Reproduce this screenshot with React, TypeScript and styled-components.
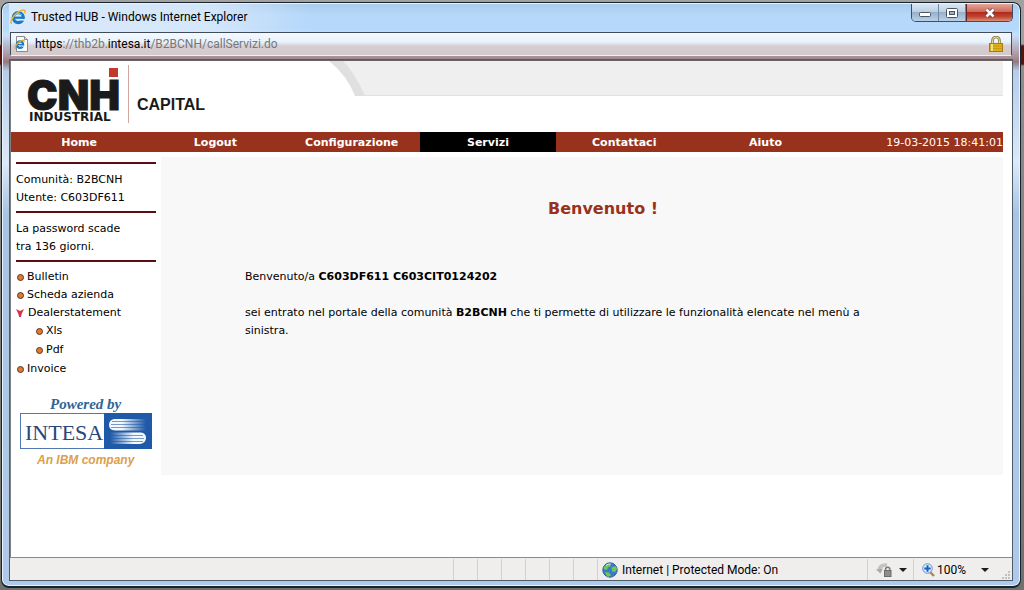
import React from "react";
import styled, { createGlobalStyle } from "styled-components";

const ui = `"Segoe UI", Roboto, "Open Sans", sans-serif`;
const web = `Verdana, "DejaVu Sans", sans-serif`;
const brick = "#98321c";

const GlobalStyle = createGlobalStyle`
  * { box-sizing: border-box; }
  body { margin: 0; }
  a { color: inherit; text-decoration: none; }
  button { border: 0; padding: 0; background: none; font: inherit; color: inherit; }
  ul { list-style: none; margin: 0; padding: 0; }
  h1, p { margin: 0; }
  svg { display: block; flex: none; }
`;

const Desktop = styled.div`
  display: flex;
  min-height: 100vh;
  padding: 2px 3px 2px 1px;
  background: linear-gradient(#a3a19f 0 44px, #5a130b 46px 64px, #8e8e8c 66px, #70716d 100%);
`;

const Window = styled.div`
  display: flex;
  flex-direction: column;
  flex: 1;
  min-width: 0;
  padding: 0 7px 5px;
  border: 1px solid #17242f;
  border-bottom-width: 2px;
  border-radius: 8px;
  background: linear-gradient(#a9cbea 0, #b5d8fb 12px, #b5d8fb 26px, #c8dff8 32px, #a98f98 54px, #93787f 59px, #b6cdea 68px, #dbe9f8 160px, #a9c4e2 210px, #b0c9ea 100%);
  box-shadow: inset 0 0 0 1px #e6f2fe;
`;

const TitleBar = styled.header`
  display: flex;
  align-items: flex-start;
  justify-content: space-between;
  height: 29px;
  margin-top: 1px;
  margin-bottom: -1px;
  background: linear-gradient(90deg, #dceafaee 0, #dceafacc 200px, #dceafa00 300px);
`;

const Title = styled.div`
  display: flex;
  align-items: center;
  gap: 5px;
  height: 26px;
  padding-left: 1px;
  font: 12px/18px ${ui};
  color: #000;
`;

const Caption = styled.div`
  display: flex;
  border: 1px solid #3c4e60;
  border-top: 0;
  border-radius: 0 0 5px 5px;
  overflow: hidden;
`;

const CaptionButton = styled.button<{ $close?: boolean }>`
  display: flex;
  align-items: center;
  justify-content: center;
  width: ${(p) => (p.$close ? 46 : 27)}px;
  height: 17px;
  border-left: ${(p) => (p.$close ? "1px solid #5b2420" : "0")};
  border-right: ${(p) => (p.$close ? "0" : "1px solid #7288a0")};
  background: ${(p) =>
    p.$close
      ? "linear-gradient(#e2a79b 0, #cf6a59 45%, #b0291b 50%, #bf4632 75%, #dd9077 100%)"
      : "linear-gradient(#d9e7f5 0, #bccfe2 45%, #98b0c9 50%, #b9d1e8 100%)"};
`;

const AddressBar = styled.div`
  display: flex;
  align-items: center;
  gap: 5px;
  height: 24px;
  margin: 0 1px;
  padding: 0 8px 0 3px;
  border: 1px solid #3f4d5a;
  border-bottom-color: #f3eeee;
  background: linear-gradient(#f4f9fe 0, #e8f3fd 9px, #d6ced3 13px, #d2c9cb 100%);
`;

const Address = styled.div`
  flex: 1;
  font: 12px/18px ${ui};
  color: #777;
  b { font-weight: 400; color: #000; }
`;

const Frame = styled.div`
  display: flex;
  flex-direction: column;
  flex: 1;
  margin-top: 3px;
  border: 1px solid #4d5c6b;
  background: #fff;
`;

const Page = styled.main`
  flex: 1;
  padding-right: 9px;
  border-left: 1px solid #808080;
  border-top: 1px solid #6b6465;
  font: 11px/18px ${web};
  color: #000;
`;

const Masthead = styled.div`
  display: flex;
  height: 71px;
`;

const Banner = styled.div`
  display: flex;
  flex: 1;
  height: 35px;
  margin-left: 106px;
`;

const BannerFill = styled.div`
  flex: 1;
  border-bottom: 1px solid #e2e2e2;
  background: #efefef;
`;

const Nav = styled.nav`
  display: grid;
  grid-template-columns: repeat(5, 136fr) 146fr 164fr;
  height: 20px;
  background: ${brick};
  color: #fff;
  line-height: 21px;
`;

const NavLink = styled.a<{ $active?: boolean }>`
  height: 20px;
  background: ${(p) => (p.$active ? "#000" : "transparent")};
  font-weight: 700;
  text-align: center;
`;

const Clock = styled.time`
  text-align: right;
  white-space: nowrap;
`;

const Columns = styled.div`
  display: flex;
  align-items: flex-start;
  gap: 5px;
  padding-top: 5px;
`;

const Sidebar = styled.aside`
  width: 145px;
  padding: 5px 0 0 5px;
`;

const Note = styled.div`
  padding: 7px 0 4px;
  border-top: 2px solid #5c0d14;
`;

const Menu = styled.ul`
  padding-top: 6px;
  border-top: 2px solid #5c0d14;
`;

const SubMenu = styled.ul`
  display: grid;
  gap: 1px;
  padding: 0 0 1px 19px;
`;

const MenuLink = styled.a`
  display: flex;
  align-items: center;
  gap: 3px;
`;

const Bullet = styled.span`
  width: 7px;
  height: 7px;
  margin-left: 1px;
  border: 1px solid #5e3420;
  border-radius: 50%;
  background: #e07a2c;
`;

const Powered = styled.a`
  display: block;
  margin: 17px 0 0 4px;
`;

const Content = styled.section`
  flex: 1;
  min-height: 318px;
  padding: 42px 42px 0 84px;
  background: #f8f8f8;
`;

const Heading = styled.h1`
  margin-bottom: 49px;
  font-size: 16px;
  line-height: 20px;
  text-align: center;
  color: ${brick};
`;

const Paragraph = styled.p`
  margin-bottom: 18px;
  padding-right: 60px;
`;

const StatusBar = styled.footer`
  display: flex;
  height: 23px;
  padding: 1px 1px 0 0;
  border-top: 1px solid #8a8a8a;
  background: #f0eded;
  font: 12px/22px ${ui};
  color: #000;
`;

const StatusCell = styled.div<{ $width?: number }>`
  display: flex;
  align-items: center;
  gap: 4px;
  flex: none;
  width: ${(p) => p.$width ?? 24}px;
  padding-left: 4px;
  border-left: 1px solid #d3d0d0;
`;

const StatusMessage = styled.div`
  flex: 1;
`;

const StatusButton = styled.button<{ $gap: number }>`
  display: flex;
  align-items: center;
  gap: ${(p) => p.$gap}px;
  padding-left: 4px;
`;

const ZoomValue = styled.span`
  display: flex;
  align-items: center;
  gap: 2px;
`;

const Grip = styled.div`
  margin-left: auto;
  align-self: flex-end;
`;

const ExplorerMark = ({ size }: { size: number }) => (
  <svg width={size} height={size} viewBox="0 0 16 16" aria-hidden="true">
    <circle cx="8.3" cy="8.6" r="5" fill="none" stroke="#1c78c8" strokeWidth="3.2" />
    <path d="M4 8.7h9" stroke="#1c78c8" strokeWidth="2.2" />
    <path d="M10.5 10h6v1.6h-6z" fill="#dcecfb" />
    <path d="M4.5 6.4Q8 2.6 12 6" fill="none" stroke="#7cc4f2" strokeWidth="1" />
    <path d="M1.6 15C-.6 12.4 4.5 4 11 1.6 14.5.3 15.8 1.6 14.6 4.2" fill="none" stroke="#e9b52a" strokeWidth="1.5" />
  </svg>
);

const PageMark = () => (
  <svg width="16" height="16" viewBox="0 0 16 16" aria-hidden="true">
    <path d="M2.5.5h8l3 3v12h-11z" fill="#fbfbfb" stroke="#8b8b8b" />
    <path d="M10.5.5v3h3" fill="#ddd" stroke="#8b8b8b" />
    <circle cx="6" cy="8.6" r="3.2" fill="none" stroke="#1c78c8" strokeWidth="2.2" />
    <path d="M3.5 8.6h5.500" stroke="#1c78c8" strokeWidth="1.6" />
    <path d="M7.5 9.6h3v1h-3z" fill="#fbfbfb" />
    <path d="M1.4 13C0 11 4 5.500 8.500 4.300q2-.5 1.500 1.500" fill="none" stroke="#e0ab22" strokeWidth="1.3" />
  </svg>
);

const Padlock = () => (
  <svg width="14" height="16" viewBox="0 0 14 16" aria-label="Sicuro" role="img">
    <path d="M3.5 8V4.500a3.500 3.500 0 0 1 7 0V8" fill="none" stroke="#8c7a3c" strokeWidth="2.6" />
    <path d="M3.5 8V4.500a3.500 3.500 0 0 1 7 0V8" fill="none" stroke="#e6dca8" strokeWidth="1" />
    <rect x=".5" y="7.5" width="13" height="8" fill="#dfae1a" stroke="#a97c0c" />
    <path d="M1 10h12M1 12.500h12" stroke="#c59a18" />
    <path d="M3 8v7" stroke="#f7df72" strokeWidth="2" />
  </svg>
);

const CnhLogo = () => (
  <svg width="212" height="71" viewBox="0 0 212 71" role="img" aria-label="CNH Industrial Capital">
    <g fill="#1a1a1a" fontWeight="900">
      <text x="16" y="49" fontFamily="Inter, sans-serif" fontSize="41" stroke="#1a1a1a" strokeWidth="1">CNH</text>
      <text x="18" y="60" fontFamily='"DejaVu Sans", sans-serif' fontSize="12" fontWeight="700">INDUSTRIAL</text>
      <text x="126" y="49" fontFamily='"Liberation Sans", sans-serif' fontSize="16" fontWeight="700">CAPITAL</text>
    </g>
    <path d="M84 31h18v6H84z" fill="#1a1a1a" />
    <rect x="98" y="7" width="9" height="9" fill="#c0392b" />
    <path d="M117.5 4v58" stroke="#d3a79f" />
  </svg>
);

const BannerCurve = () => (
  <svg width="40" height="35" viewBox="0 0 40 35" aria-hidden="true">
    <path d="M8 0H40V35H30Q24 14 8 0z" fill="#efefef" />
    <path d="M0 0H14Q26 12 36 35H26Q18 14 0 0z" fill="#e0e0e0" />
    <path d="M36 34.500H40" stroke="#e2e2e2" />
  </svg>
);

const IntesaLogo = () => (
  <svg width="134" height="76" viewBox="0 0 134 76" role="img" aria-label="Powered by Intesa, an IBM company">
    <defs>
      <linearGradient id="fadeRight">
        <stop offset=".35" stopColor="#f2f8fe" />
        <stop offset="1" stopColor="#1f5aa8" />
      </linearGradient>
      <linearGradient id="fadeLeft">
        <stop offset="0" stopColor="#1f5aa8" />
        <stop offset=".65" stopColor="#f2f8fe" />
      </linearGradient>
    </defs>
    <text x="30" y="14" fontFamily='"Liberation Serif", serif' fontSize="15" fontWeight="700" fontStyle="italic" fill="#2f6496">Powered by</text>
    <rect x=".5" y="18.5" width="131" height="35" fill="#fff" stroke="#4f78b4" />
    <rect x="84" y="18" width="48" height="36" fill="#1f5aa8" />
    <text x="5" y="45" fontFamily='"Liberation Serif", serif' fontSize="22" fill="#27477f">INTESA</text>
    <path d="M126 24H94q-5 1-5 6t6 5.500h31z" fill="url(#fadeRight)" />
    <path d="M90 37.500h31q5 .5 5 5.500t-6 6H90z" fill="url(#fadeLeft)" />
    <path d="M92 26.500h34M91 29.500h35M91 32.500h35M90 40.500h33M90 43.500h34M90 46.500h33" stroke="#1f5aa8" strokeWidth=".6" />
    <text x="17" y="69" fontFamily='"Liberation Sans", sans-serif' fontSize="12" fontWeight="700" fontStyle="italic" fill="#dba04c">An IBM company</text>
  </svg>
);

const Arrow = () => (
  <svg width="9" height="8" viewBox="0 0 9 8" aria-hidden="true">
    <path d="M0 0l4 2 4-2-2.200 4.500L4.800 8H3.200L2.200 4.500z" fill="#d8304c" />
  </svg>
);

const Globe = () => (
  <svg width="16" height="16" viewBox="0 0 16 16" aria-hidden="true">
    <circle cx="8" cy="8" r="7.2" fill="#3a78c8" stroke="#35609a" />
    <path d="M2 5Q4 1.500 8 2l1 2-3 1.500L5 8 2 7.500zM9.500 5.500l4-1.500 1.500 3-2 3-3-.5zM3 10l4 .5 2 3-3 1.500Q3.500 13 3 10z" fill="#6cc858" />
    <path d="M4 3.500Q6 1.500 9 2" stroke="#d2ecfb" fill="none" />
  </svg>
);

const Caret = () => (
  <svg width="8" height="4" viewBox="0 0 8 4" aria-hidden="true">
    <path d="M0 0h8L4 4z" fill="#1b1b1b" />
  </svg>
);

const PrivacyMark = () => (
  <svg width="16" height="16" viewBox="0 0 16 16" aria-hidden="true">
    <path d="M3 8Q4 2.500 11 3" fill="none" stroke="#c2c2c2" strokeWidth="3.4" />
    <path d="M0 7.500l7-1-2.500 5z" fill="#a9a9a9" />
    <path d="M9.500 9V7.500a2.200 2.200 0 0 1 4.400 0V9" fill="none" stroke="#777" strokeWidth="1.4" />
    <rect x="8.5" y="8.5" width="6.5" height="6" fill="#8d8d8d" stroke="#6b6b6b" />
  </svg>
);

const Magnifier = () => (
  <svg width="13" height="14" viewBox="0 0 13 14" aria-hidden="true">
    <path d="M8 9l4 4" stroke="#b98346" strokeWidth="2.4" />
    <circle cx="5.5" cy="5.5" r="4.800" fill="#d9ecfd" stroke="#6794c8" />
    <path d="M5.500 2.300v6.400M2.300 5.500h6.400" stroke="#1c5fc0" strokeWidth="2" />
  </svg>
);

const GripDots = () => (
  <svg width="10" height="10" viewBox="0 0 10 10" aria-hidden="true">
    <path d="M7 1h2v2H7zM4 4h2v2H4zM7 4h2v2H7zM1 7h2v2H1zM4 7h2v2H4zM7 7h2v2H7z" fill="#c3bfbf" />
  </svg>
);

const sections = ["Home", "Logout", "Configurazione", "Servizi", "Contattaci", "Aiuto"];

const Entry = ({ label }: { label: string }) => (
  <li>
    <MenuLink href="#"><Bullet />{label}</MenuLink>
  </li>
);

export default function App() {
  return (
    <Desktop>
      <GlobalStyle />
      <Window>
        <TitleBar>
          <Title><ExplorerMark size={16} />Trusted HUB - Windows Internet Explorer</Title>
          <Caption>
            <CaptionButton aria-label="Riduci a icona">
              <svg width="12" height="11" viewBox="0 0 12 11"><rect x=".5" y="5.5" width="11" height="4" rx="1" fill="#fff" stroke="#4a5663" /></svg>
            </CaptionButton>
            <CaptionButton aria-label="Ingrandisci">
              <svg width="12" height="10" viewBox="0 0 12 10">
                <rect x=".5" y=".5" width="11" height="9" rx="1" fill="#fff" stroke="#4a5663" />
                <rect x="3.5" y="3.5" width="5" height="3" fill="#9db3ca" stroke="#4a5663" />
              </svg>
            </CaptionButton>
            <CaptionButton $close aria-label="Chiudi">
              <svg width="12" height="10" viewBox="0 0 12 10">
                <path d="M2.500 1.500l7 7M9.500 1.500l-7 7" stroke="#5c3a3a" strokeWidth="4" />
                <path d="M2.500 1.500l7 7M9.500 1.500l-7 7" stroke="#fff" strokeWidth="2.6" />
              </svg>
            </CaptionButton>
          </Caption>
        </TitleBar>
        <AddressBar>
          <PageMark />
          <Address role="textbox" aria-readonly="true" aria-label="Indirizzo">
            <b>https</b>://thb2b.<b>intesa.it</b>/B2BCNH/callServizi.do
          </Address>
          <Padlock />
        </AddressBar>
        <Frame>
          <Page>
            <Masthead>
              <CnhLogo />
              <Banner><BannerCurve /><BannerFill /></Banner>
            </Masthead>
            <Nav>
              {sections.map((s) => (
                <NavLink key={s} href="#" $active={s === "Servizi"}>{s}</NavLink>
              ))}
              <Clock dateTime="2015-03-19T18:41:01">19-03-2015 18:41:01</Clock>
            </Nav>
            <Columns>
              <Sidebar>
                <Note>Comunità: B2BCNH<br />Utente: C603DF611</Note>
                <Note>La password scade<br />tra 136 giorni.</Note>
                <Menu>
                  <Entry label="Bulletin" />
                  <Entry label="Scheda azienda" />
                  <li>
                    <MenuLink href="#"><Arrow />Dealerstatement</MenuLink>
                    <SubMenu>
                      <Entry label="Xls" />
                      <Entry label="Pdf" />
                    </SubMenu>
                  </li>
                  <Entry label="Invoice" />
                </Menu>
                <Powered href="#"><IntesaLogo /></Powered>
              </Sidebar>
              <Content>
                <Heading>Benvenuto !</Heading>
                <Paragraph>Benvenuto/a <b>C603DF611 C603CIT0124202</b></Paragraph>
                <Paragraph>
                  sei entrato nel portale della comunità <b>B2BCNH</b> che ti permette di utilizzare le funzionalità elencate nel menù a sinistra.
                </Paragraph>
              </Content>
            </Columns>
          </Page>
          <StatusBar>
            <StatusMessage />
            {[0, 1, 2, 3, 4, 5].map((i) => <StatusCell key={i} />)}
            <StatusCell $width={270}><Globe />Internet | Protected Mode: On</StatusCell>
            <StatusCell $width={46}>
              <StatusButton $gap={7} aria-label="Privacy"><PrivacyMark /><Caret /></StatusButton>
            </StatusCell>
            <StatusCell $width={98}>
              <StatusButton $gap={15} aria-label="Zoom 100%">
                <ZoomValue><Magnifier />100%</ZoomValue>
                <Caret />
              </StatusButton>
              <Grip><GripDots /></Grip>
            </StatusCell>
          </StatusBar>
        </Frame>
      </Window>
    </Desktop>
  );
}
